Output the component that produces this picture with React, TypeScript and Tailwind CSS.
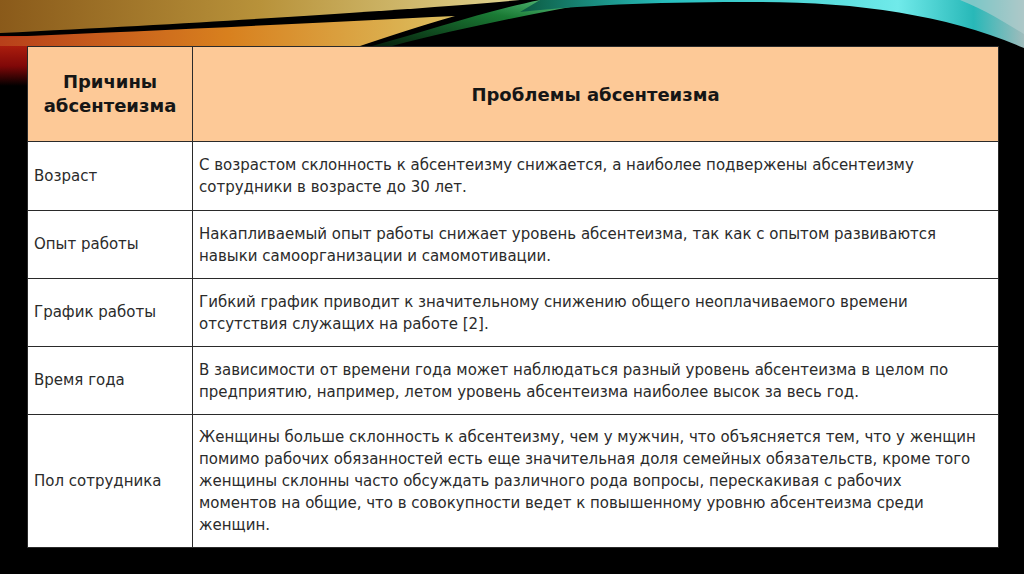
import React from 'react';

type Row = { cause: string; lines: string[]; h: string };

const ROWS: Row[] = [
    {
        cause: 'Возраст',
        lines: [
            'С возрастом склонность к абсентеизму снижается, а наиболее подвержены абсентеизму',
            'сотрудники в возрасте до 30 лет.',
        ],
        h: 'h-[69px]',
    },
    {
        cause: 'Опыт работы',
        lines: [
            'Накапливаемый опыт работы снижает уровень абсентеизма, так как с опытом развиваются',
            'навыки самоорганизации и самомотивации.',
        ],
        h: 'h-[68px]',
    },
    {
        cause: 'График работы',
        lines: [
            'Гибкий график приводит к значительному снижению общего неоплачиваемого времени',
            'отсутствия служащих на работе [2].',
        ],
        h: 'h-[68px]',
    },
    {
        cause: 'Время года',
        lines: [
            'В зависимости от времени года может наблюдаться разный уровень абсентеизма в целом по',
            'предприятию, например, летом уровень абсентеизма наиболее высок за весь год.',
        ],
        h: 'h-[68px]',
    },
    {
        cause: 'Пол сотрудника',
        lines: [
            'Женщины больше склонность к абсентеизму, чем у мужчин, что объясняется тем, что у женщин',
            'помимо рабочих обязанностей есть еще значительная доля семейных обязательств, кроме того',
            'женщины склонны часто обсуждать различного рода вопросы, перескакивая с рабочих',
            'моментов на общие, что в совокупности ведет к повышенному уровню абсентеизма среди',
            'женщин.',
        ],
        h: 'h-[133px]',
    },
];

// swooshes along the top edge of the slide
const TopWaves: React.FC = () => (
    <svg className="absolute left-0 top-0" width="1024" height="130" viewBox="0 0 1024 130">
        <defs>
            <linearGradient id="gUpper" x1="0" y1="0" x2="1" y2="0">
                <stop offset="0" stopColor="#8a5a1a" />
                <stop offset="0.5" stopColor="#b8923a" />
                <stop offset="1" stopColor="#e0d490" />
            </linearGradient>
            <linearGradient id="gLower" x1="0" y1="0" x2="1" y2="0">
                <stop offset="0" stopColor="#b8401a" />
                <stop offset="0.5" stopColor="#d8801e" />
                <stop offset="1" stopColor="#dcc060" />
            </linearGradient>
            <linearGradient id="gGreen" x1="0" y1="1" x2="1" y2="0">
                <stop offset="0" stopColor="#06200c" />
                <stop offset="0.6" stopColor="#1a7a34" />
                <stop offset="1" stopColor="#6ad090" />
            </linearGradient>
            <linearGradient id="gCyan" x1="0" y1="0" x2="1" y2="0">
                <stop offset="0" stopColor="#0c5a40" />
                <stop offset="0.3" stopColor="#28c0c0" />
                <stop offset="0.75" stopColor="#70eaea" />
                <stop offset="0.9" stopColor="#28b8b8" />
                <stop offset="1" stopColor="#a0bcbc" />
            </linearGradient>
            <linearGradient id="gRed" x1="0" y1="0" x2="0" y2="1">
                <stop offset="0" stopColor="#c02810" />
                <stop offset="0.6" stopColor="#800808" />
                <stop offset="1" stopColor="#000000" />
            </linearGradient>
        </defs>
        <rect x="0" y="36" width="27" height="50" fill="url(#gRed)" />
        <path d="M0,0 H520 C430,8 260,20 0,33 Z" fill="url(#gUpper)" />
        <path d="M0,37 C180,30 330,22 455,16 C420,26 390,36 360,46 H0 Z" fill="url(#gLower)" />
        <path d="M372,46 C430,30 490,10 540,0 H610 C540,12 460,28 392,46 Z" fill="url(#gGreen)" />
        <path d="M520,12 C600,4 660,2 760,2 C860,2 950,16 1024,48 V0 H540 Z" fill="url(#gCyan)" />
        <path d="M960,0 C990,12 1010,26 1024,34 V0 Z" fill="#b8d0d0" opacity="0.6" />
    </svg>
);

export default function App() {
    return (
        <div
            className="relative h-[574px] w-[1024px] overflow-hidden bg-black"
            style={{ fontFamily: '"DejaVu Sans", Verdana, sans-serif' }}
        >
            <TopWaves />
            <div className="relative pl-[27px] pt-[46px]">
                <table className="w-[971px] table-fixed border-collapse bg-white text-[#2b2b2b]">
                    <colgroup>
                        <col className="w-[165px]" />
                        <col className="w-[806px]" />
                    </colgroup>
                    <thead>
                        <tr className="h-[95px] bg-[#fdc997]">
                            <th className="border border-[#2a2a2a] text-center text-[18px] font-bold leading-[24px] text-[#161616]">
                                Причины
                                <br />
                                абсентеизма
                            </th>
                            <th className="border border-[#2a2a2a] text-center text-[18px] font-bold text-[#161616]">
                                Проблемы абсентеизма
                            </th>
                        </tr>
                    </thead>
                    <tbody>
                        {ROWS.map(row => (
                            <tr key={row.cause} className={row.h}>
                                <td className="border border-[#2a2a2a] px-[6px] align-middle text-[15px]">
                                    {row.cause}
                                </td>
                                <td className="border border-[#2a2a2a] px-[6px] align-middle text-[15px] leading-[22px]">
                                    {row.lines.map((l, i) => (
                                        <div key={i} className="whitespace-nowrap">
                                            {l}
                                        </div>
                                    ))}
                                </td>
                            </tr>
                        ))}
                    </tbody>
                </table>
            </div>
        </div>
    );
}
